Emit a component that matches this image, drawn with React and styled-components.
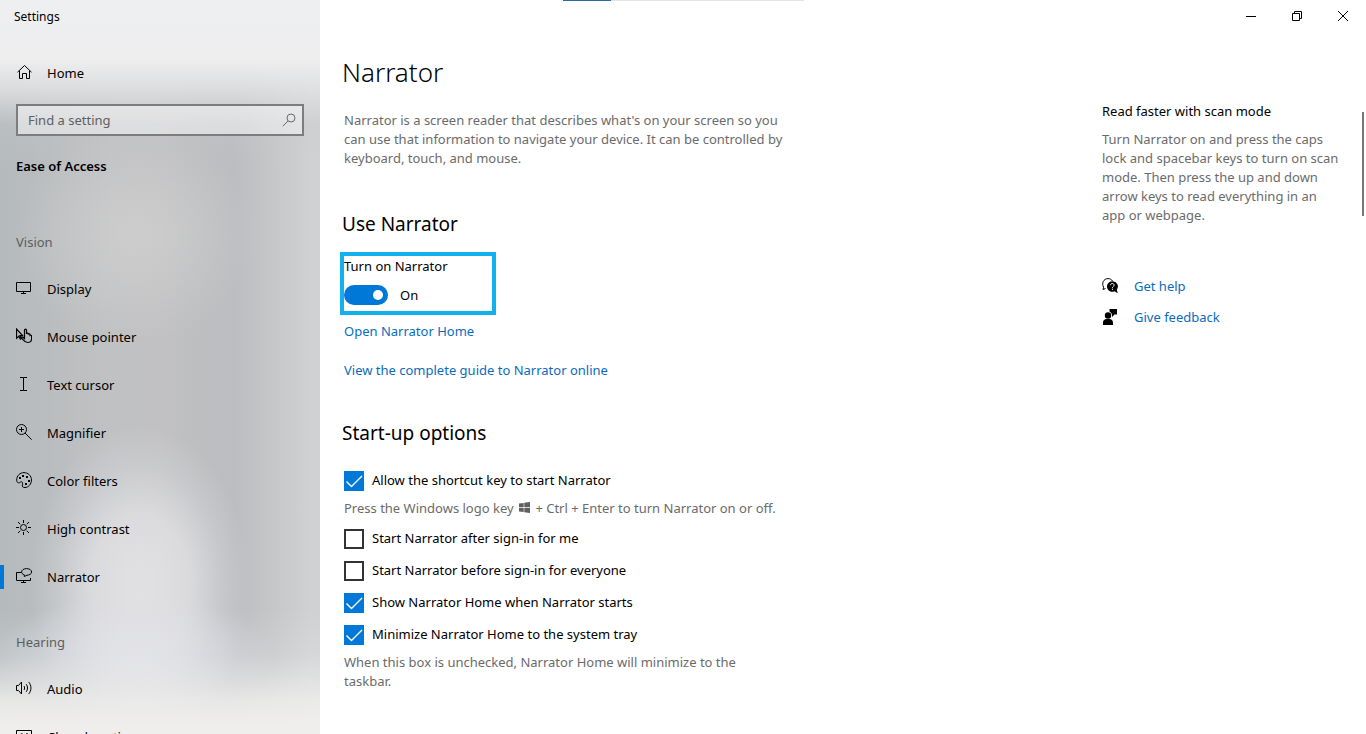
import React, { useState } from "react";
import styled, { createGlobalStyle, css } from "styled-components";

const GlobalStyle = createGlobalStyle`
  * {
    box-sizing: border-box;
  }

  body {
    margin: 0;
    background: #fff;
    color: #000;
    font-family: "Noto Sans", "Open Sans", sans-serif;
    font-size: 13px;
    line-height: 19px;
  }

  h1, h2, h3, p, ul {
    margin: 0;
    padding: 0;
    font-weight: 400;
  }

  button, input {
    font: inherit;
    color: inherit;
  }
`;

const Shell = styled.div`
  display: flex;
  height: 100vh;
  overflow: hidden;
`;

/* Blurred "acrylic" backdrop built from stacked gradients */
const Sidebar = styled.aside`
  flex: 0 0 320px;
  overflow: hidden;
  background:
    linear-gradient(
      180deg,
      #eeeff1 0,
      #eeeeef 60px,
      rgba(226, 227, 228, 0.8) 90px,
      rgba(200, 202, 204, 0.25) 125px,
      rgba(200, 202, 204, 0) 165px
    ),
    linear-gradient(
      180deg,
      rgba(239, 238, 237, 0) 610px,
      rgba(239, 238, 237, 0.2) 655px,
      rgba(239, 238, 237, 0.85) 700px,
      #efeeed 725px
    ),
    radial-gradient(
      ellipse 110px 160px at 140px 585px,
      rgba(226, 226, 229, 0.95) 10%,
      rgba(225, 225, 228, 0.8) 45%,
      rgba(222, 223, 227, 0.3) 75%,
      rgba(222, 223, 227, 0) 100%
    ),
    radial-gradient(ellipse 140px 60px at 135px 655px, #d8dce6 10%, rgba(216, 220, 230, 0) 100%),
    radial-gradient(ellipse 120px 110px at 135px 235px, rgba(206, 206, 206, 0.85) 10%, rgba(206, 206, 206, 0) 100%),
    linear-gradient(90deg, #b5babd 0, #babdbf 50px, #c0c1c3 110px, #c1c1c3 160px, #bcbec0 205px, #bbbdc0 235px, #c4c6c8 270px, #cfd1d3 310px);
`;

const TitleBar = styled.div`
  height: 34px;
  padding: 0 14px;
  font-size: 12px;
  line-height: 34px;
`;

const NavLink = styled.a`
  position: relative;
  display: flex;
  align-items: center;
  gap: 15px;
  height: ${({ $short }) => ($short ? "40px" : "48px")};
  padding: 0 16px;
  color: #000;
  text-decoration: none;

  svg {
    margin-bottom: 2px;
  }

  ${({ $active }) =>
    $active &&
    css`
      &::before {
        content: "";
        position: absolute;
        left: 0;
        top: 12px;
        width: 4px;
        height: 24px;
        background: #0078d7;
      }
    `}
`;

const HomeRow = styled.div`
  margin-top: 19px;
`;

const SearchBox = styled.label`
  display: flex;
  align-items: center;
  height: 32px;
  margin: 11px 16px 20px;
  padding: 0 6px 0 10px;
  border: 2px solid #7c7d7f;
  background: rgba(255, 255, 255, 0.45);
  color: #6a6b6d;

  input {
    flex: 1;
    min-width: 0;
    padding: 0;
    border: 0;
    outline: 0;
    background: none;
  }

  input::placeholder {
    color: #5f6062;
    opacity: 1;
  }
`;

const SidebarTitle = styled.h2`
  padding: 0 16px;
  font-size: 13px;
  font-weight: 600;
  line-height: 20px;
`;

const NavGroup = styled.section`
  margin-top: ${({ $first }) => ($first ? "56px" : "31px")};

  h3 {
    padding: 0 16px;
    margin-bottom: 13px;
    color: #5c5e60;
    font-size: 13px;
    line-height: 20px;
  }

  ul {
    list-style: none;
  }
`;

const Icon = styled.svg`
  flex: none;
  width: ${({ $size }) => $size || 16}px;
  height: ${({ $size }) => $size || 16}px;
  fill: none;
  stroke: currentColor;
  stroke-width: 1;
`;

const Main = styled.main`
  position: relative;
  flex: 1;
  min-width: 0;
  display: flex;
  flex-direction: column;
`;

const LoadingBar = styled.div`
  position: absolute;
  top: 0;
  left: 243px;
  width: 241px;
  height: 1px;
  background: linear-gradient(90deg, #2a6aa5 48px, #e4e4e4 48px);
`;

const WindowControls = styled.div`
  display: flex;
  justify-content: flex-end;
  height: 32px;
`;

const WindowButton = styled.button`
  display: flex;
  align-items: center;
  justify-content: center;
  width: 46px;
  padding: 0;
  border: 0;
  background: none;

  &:hover {
    background: #e5e5e5;
  }
`;

const Page = styled.div`
  flex: 1;
  min-height: 0;
  display: flex;
  padding-left: 24px;
`;

const Content = styled.div`
  flex: 0 1 450px;
  padding-top: 20px;
`;

const PageTitle = styled.h1`
  margin: 0 0 19px -2px;
  font-size: 26px;
  font-weight: 350;
  line-height: 40px;
`;

const Muted = styled.p`
  color: #6b6b6b;
`;

const Hint = styled(Muted)`
  max-width: 440px;
  margin: 3px 0 4px;
`;

const SectionTitle = styled.h2`
  margin: 0 0 14px -2px;
  font-size: 19px;
  line-height: 28px;
`;

const Section = styled.section`
  margin-top: ${({ $gap }) => $gap}px;
`;

const OptionList = styled.div`
  padding-top: 3px;
`;

const Highlight = styled.div`
  width: 156px;
  margin-left: -4px;
  border: 4px solid #12b0ec;
  padding-bottom: 6px;
`;

const SwitchLabel = styled.label`
  display: block;
  line-height: 20px;
`;

const SwitchRow = styled.div`
  display: flex;
  align-items: center;
  gap: 12px;
  margin-top: 9px;
`;

const Switch = styled.input`
  appearance: none;
  display: flex;
  align-items: center;
  justify-content: flex-start;
  width: 44px;
  height: 20px;
  margin: 0;
  padding: 0 5px;
  border: 2px solid #333;
  border-radius: 10px;

  &::before {
    content: "";
    width: 10px;
    height: 10px;
    border-radius: 50%;
    background: #333;
  }

  &:checked {
    justify-content: flex-end;
    padding: 0 3px;
    border-color: #0078d7;
    background: #0078d7;
  }

  &:checked::before {
    background: #fff;
  }
`;

const TextLink = styled.a`
  color: #0a6cbd;
  text-decoration: none;

  &:hover {
    color: #666;
  }
`;

const LinkLine = styled.p`
  margin-top: ${({ $gap }) => $gap}px;
`;

const CheckRow = styled.label`
  display: flex;
  align-items: center;
  gap: 8px;
  height: 32px;
`;

const CheckBox = styled.span`
  display: grid;
  width: 20px;
  height: 20px;
  margin-top: 1px;

  > * {
    grid-area: 1 / 1;
  }

  input {
    appearance: none;
    width: 20px;
    height: 20px;
    margin: 0;
    border: 2px solid #333;
    background: #fff;
  }

  input:checked {
    border-color: #0078d7;
    background: #0078d7;
  }

  svg {
    color: #fff;
    pointer-events: none;
  }
`;

const CheckMark = styled(Icon)`
  stroke-width: 1.4;
`;

const WinLogo = styled.svg`
  width: 11px;
  height: 11px;
  margin: 0 2px;
  fill: #5f5f5f;
`;

const Side = styled.aside`
  flex: 0 0 240px;
  margin: 0 20px 0 auto;
  padding-top: 69px;

  h3 {
    margin-bottom: 9px;
    font-size: 13px;
    line-height: 20px;
  }
`;

const HelpLinks = styled.nav`
  display: flex;
  flex-direction: column;
  gap: 11px;
  margin-top: 51px;
`;

const HelpLink = styled(TextLink)`
  display: flex;
  align-items: center;
  gap: 16px;
  height: 20px;

  svg {
    color: #000;
  }
`;

const ScrollTrack = styled.div`
  flex: 0 0 4px;
  padding: 80px 2px 0 0;
`;

const ScrollThumb = styled.div`
  height: 104px;
  background: #767676;
`;

const icons = {
  home: (
    <path d="M1.5 8.2 8.5 1.5l7 6.7M3.5 6.8v7.7h3v-5h4v5h3V6.8" />
  ),
  display: <path d="M.5 2.5h14v9H.5zM7.5 11.5v2M5 13.5h5" />,
  mouse: (
    <>
      <path d="M.5 1v9.2l2.3-2 1.5 3 1.2-.6-1.4-2.9h2.6z" strokeWidth="1.2" />
      <path
        d="M8.5 8.500V2.200a1 1 0 0 1 2 0V6M10.500 6V5.500c.4-.6 1.600-.4 1.800.3v1M12.300 6.200c.4-.5 1.500-.3 1.700.4v.8c.6-.4 1.600-.1 1.600.7v2.600c0 2-1.500 3.800-3.900 3.800-2.400 0-3.600-1.500-4.500-2.600L5 9.700c.6-1 2-.8 3.500.8V8"
        strokeWidth="1.2"
      />
    </>
  ),
  cursor: <path d="M4 1.500h3.500v13H4M11 1.500H7.500M11 14.500H7.500" />,
  magnifier: (
    <>
      <circle cx="5.500" cy="5.500" r="5" />
      <path d="M9 9l6.700 6.700M5.500 3v5M3 5.500h5" />
    </>
  ),
  palette: (
    <>
      <path d="M.7 8.200C.5 3.800 4 .6 8 .6s7.500 3.200 7.500 7.400-3.200 7.500-6.500 7.500c-2.500 0-3-1-2.600-2.600.4-1.500.3-2.700-.8-3.100-1.200-.4-1.700 1.200-3 1.100C1.300 10.800.8 9.700.7 8.200z" />
      <g fill="currentColor" stroke="none">
        <rect x="3" y="5" width="2" height="2" />
        <rect x="6" y="3" width="2" height="2" />
        <rect x="10" y="4" width="2" height="2" />
        <rect x="12" y="8" width="2" height="2" />
        <rect x="9" y="11" width="2" height="2" />
      </g>
    </>
  ),
  contrast: (
    <>
      <circle cx="7.500" cy="7.500" r="3" />
      <path d="M7.500 0v3M7.500 12v3M0 7.500h3M12 7.500h3M2 2l2.200 2.200M10.800 10.800 13 13M13 2l-2.200 2.200M4.200 10.800 2 13" />
    </>
  ),
  narrator: (
    <>
      <path d="M5 4.500H.5v8h14V10M7.500 12.500v2M5 14.500h5" />
      <path d="M8.300 8.500V6.800C6.500 6.200 5.600 5.300 5.600 4c0-2 2.200-3.400 5-3.400s5 1.400 5 3.400-2.300 3.200-4.600 3.200z" />
    </>
  ),
  audio: (
    <>
      <path d="M.5 5.500h2l3-3.500v12l-3-3.500h-2z" />
      <path d="M8 6c.8 1 .8 3 0 4M10.200 4.200c1.800 2.300 1.800 5.300 0 7.600M12.700 2c3 3.500 3 8.500 0 12" />
    </>
  ),
  captions: (
    <>
      <path d="M.5 2.500h15v12H.5z" />
      <path d="M7 6.500c-.5-1-3.500-1.500-3.500 2s3 3 3.500 2M12.500 6.500c-.5-1-3.500-1.500-3.500 2s3 3 3.500 2" />
    </>
  ),
};

const groups = [
  {
    title: "Vision",
    items: [
      ["display", "Display"],
      ["mouse", "Mouse pointer"],
      ["cursor", "Text cursor"],
      ["magnifier", "Magnifier"],
      ["palette", "Color filters"],
      ["contrast", "High contrast"],
      ["narrator", "Narrator"],
    ],
  },
  {
    title: "Hearing",
    items: [
      ["audio", "Audio"],
      ["captions", "Closed captions"],
    ],
  },
];

function Option({ label, defaultChecked }) {
  const [checked, setChecked] = useState(!!defaultChecked);

  return (
    <CheckRow>
      <CheckBox>
        <input
          type="checkbox"
          checked={checked}
          onChange={(e) => setChecked(e.target.checked)}
        />
        {checked && (
          <CheckMark $size={20} viewBox="0 0 20 20">
            <path d="M2.500 10.500l5 5L18 5" />
          </CheckMark>
        )}
      </CheckBox>
      <span>{label}</span>
    </CheckRow>
  );
}

function App() {
  const [on, setOn] = useState(true);

  return (
    <>
      <GlobalStyle />
      <Shell>
        <Sidebar>
          <TitleBar>Settings</TitleBar>
          <HomeRow>
            <NavLink href="#home" $short>
              <Icon viewBox="0 0 16 16">{icons.home}</Icon>
              Home
            </NavLink>
          </HomeRow>
          <SearchBox>
            <input type="text" placeholder="Find a setting" aria-label="Find a setting" />
            <Icon $size={14} viewBox="0 0 14 14">
              <circle cx="9" cy="5" r="4" />
              <path d="M6 8 .8 13.200" />
            </Icon>
          </SearchBox>
          <SidebarTitle>Ease of Access</SidebarTitle>
          {groups.map((group, i) => (
            <NavGroup key={group.title} $first={i === 0}>
              <h3>{group.title}</h3>
              <ul>
                {group.items.map(([icon, label]) => (
                  <li key={icon}>
                    <NavLink href={`#${icon}`} $active={icon === "narrator"}>
                      <Icon viewBox="0 0 16 16">{icons[icon]}</Icon>
                      {label}
                    </NavLink>
                  </li>
                ))}
              </ul>
            </NavGroup>
          ))}
        </Sidebar>

        <Main>
          <LoadingBar />
          <WindowControls>
            <WindowButton aria-label="Minimize">
              <Icon $size={10} viewBox="0 0 10 10">
                <path d="M0 5.500h10" />
              </Icon>
            </WindowButton>
            <WindowButton aria-label="Restore">
              <Icon $size={10} viewBox="0 0 10 10">
                <path d="M.5 2.500h7v7h-7zM2.500 2.500v-2h7v7h-2" />
              </Icon>
            </WindowButton>
            <WindowButton aria-label="Close">
              <Icon $size={10} viewBox="0 0 10 10">
                <path d="M0 0l10 10M10 0 0 10" />
              </Icon>
            </WindowButton>
          </WindowControls>

          <Page>
            <Content>
              <PageTitle>Narrator</PageTitle>
              <Muted>
                Narrator is a screen reader that describes what's on your screen so you can use
                that information to navigate your device. It can be controlled by keyboard,
                touch, and mouse.
              </Muted>

              <Section $gap={42}>
                <SectionTitle>Use Narrator</SectionTitle>
                <Highlight>
                  <SwitchLabel htmlFor="narrator-switch">Turn on Narrator</SwitchLabel>
                  <SwitchRow>
                    <Switch
                      id="narrator-switch"
                      type="checkbox"
                      role="switch"
                      checked={on}
                      onChange={(e) => setOn(e.target.checked)}
                    />
                    <span>{on ? "On" : "Off"}</span>
                  </SwitchRow>
                </Highlight>
                <LinkLine $gap={7}>
                  <TextLink href="#narrator-home">Open Narrator Home</TextLink>
                </LinkLine>
                <LinkLine $gap={20}>
                  <TextLink href="#guide">View the complete guide to Narrator online</TextLink>
                </LinkLine>
              </Section>

              <Section $gap={39}>
                <SectionTitle>Start-up options</SectionTitle>
                <OptionList>
                  <Option label="Allow the shortcut key to start Narrator" defaultChecked />
                  <Hint>
                    Press the Windows logo key{" "}
                    <WinLogo viewBox="0 0 11 11">
                      <path d="M0 1.500 4.700.9v4.200H0zM5.300.8 11 0v5.100H5.300zM0 5.800h4.700V10L0 9.400zM5.300 5.800H11V11l-5.700-.8z" />
                    </WinLogo>{" "}
                    + Ctrl + Enter to turn Narrator on or off.
                  </Hint>
                  <Option label="Start Narrator after sign-in for me" />
                  <Option label="Start Narrator before sign-in for everyone" />
                  <Option label="Show Narrator Home when Narrator starts" defaultChecked />
                  <Option label="Minimize Narrator Home to the system tray" defaultChecked />
                  <Hint>
                    When this box is unchecked, Narrator Home will minimize to the taskbar.
                  </Hint>
                </OptionList>
              </Section>
            </Content>

            <Side>
              <h3>Read faster with scan mode</h3>
              <Muted>
                Turn Narrator on and press the caps lock and spacebar keys to turn on scan mode.
                Then press the up and down arrow keys to read everything in an app or webpage.
              </Muted>
              <HelpLinks>
                <HelpLink href="#help">
                  <Icon viewBox="0 0 16 16">
                    <path d="M3.500 10.500 1 11.500l.6-2.300C-.6 5.500 1.500.6 6 .6c2.200 0 3.600.9 4.500 2.400" />
                    <path
                      d="M10.200 3.200a5.300 5.300 0 1 0 2.300 10.100l3.300 1.900-1-3.500a5.300 5.300 0 0 0-4.600-8.500z"
                      fill="currentColor"
                      stroke="none"
                    />
                    <path
                      d="M8.500 7.200c0-2.300 3.600-2.200 3.600 0 0 1.300-1.700 1.300-1.700 2.600M10.400 10.700v1.200"
                      stroke="#fff"
                    />
                  </Icon>
                  Get help
                </HelpLink>
                <HelpLink href="#feedback">
                  <Icon viewBox="0 0 16 16">
                    <g fill="currentColor" stroke="none">
                      <circle cx="6" cy="6.500" r="3.200" />
                      <path d="M1 16v-2.500C1 11.300 2.600 10 4.600 10h2.800c2 0 3.600 1.300 3.600 3.500V16z" />
                      <path d="M7.500 0H15v5.500h-2.500L10 8V5.500A4.500 4.500 0 0 0 7.500 2.600z" />
                    </g>
                  </Icon>
                  Give feedback
                </HelpLink>
              </HelpLinks>
            </Side>
            <ScrollTrack>
              <ScrollThumb />
            </ScrollTrack>
          </Page>
        </Main>
      </Shell>
    </>
  );
}

export default App;
